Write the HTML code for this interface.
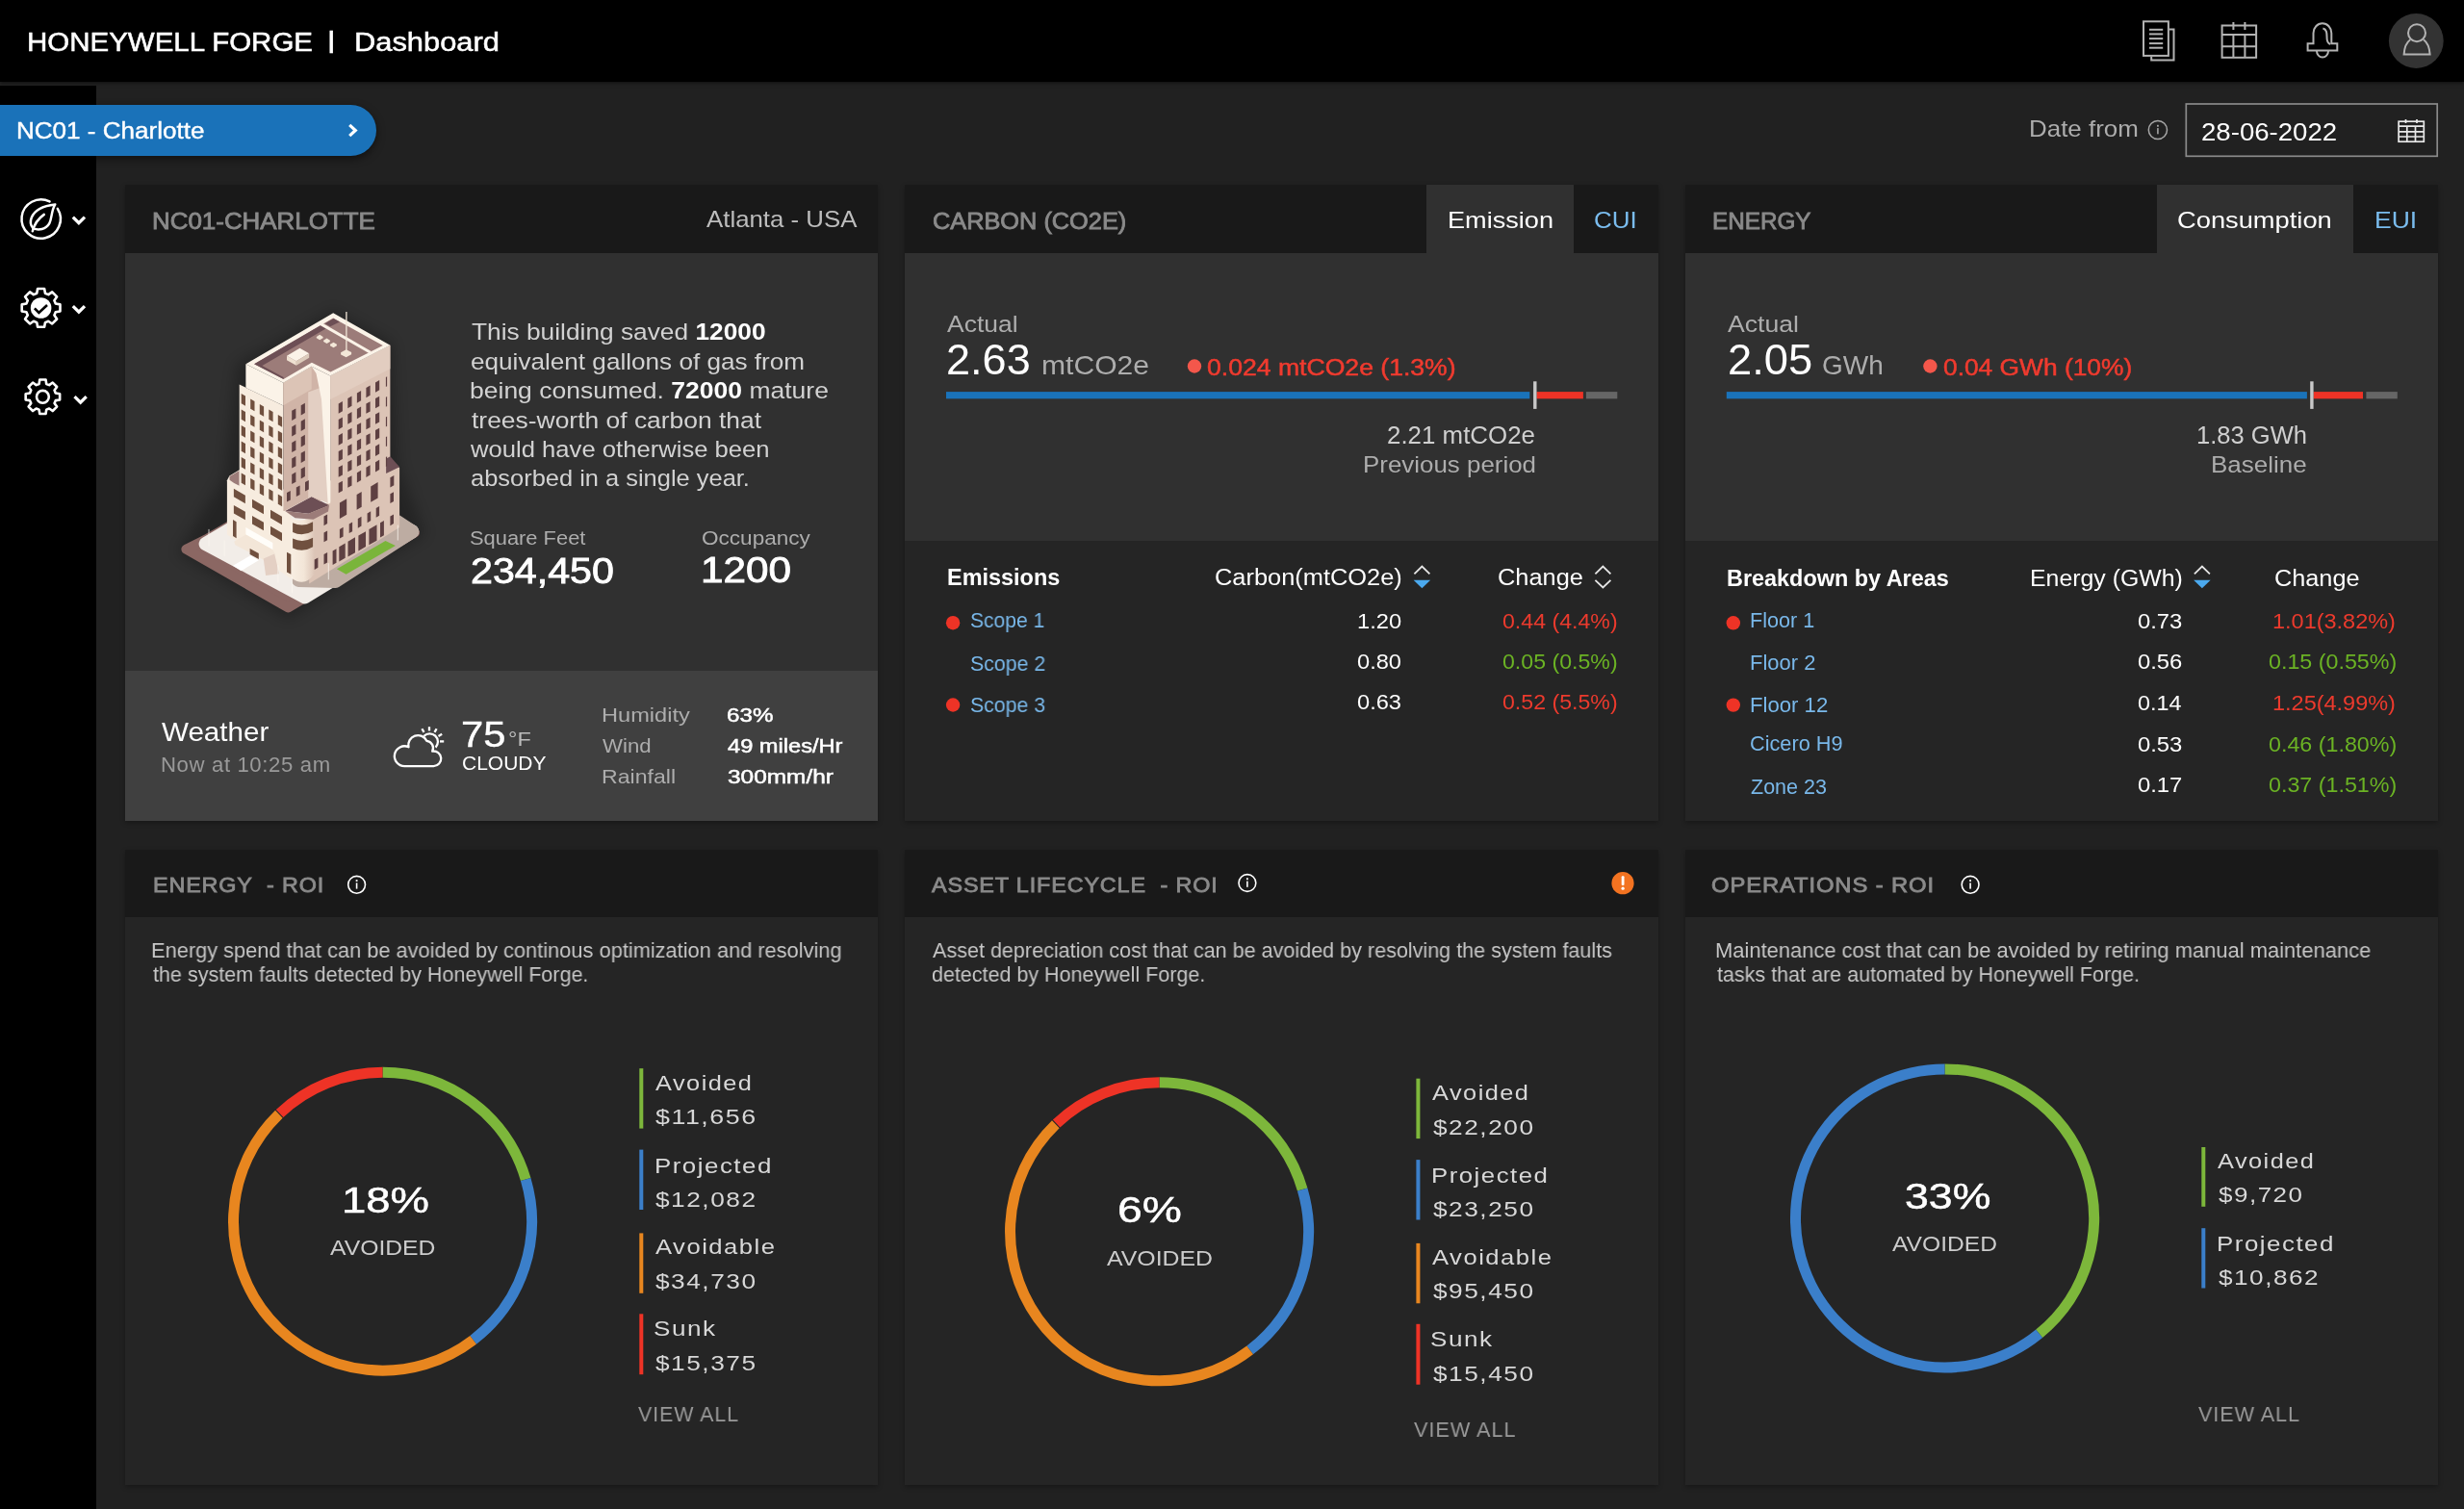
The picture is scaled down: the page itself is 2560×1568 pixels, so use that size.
<!DOCTYPE html>
<html lang="en"><head><meta charset="utf-8"><title>Honeywell Forge | Dashboard</title>
<style>
html,body{margin:0;padding:0}
body{width:2560px;height:1568px;overflow:hidden;background:#212121;position:relative;font-family:"Liberation Sans",sans-serif}
body>div{position:absolute}
.t{white-space:pre;line-height:1;transform-origin:0 0;z-index:5;will-change:transform}
.t b{font-weight:700}
.v{position:absolute;left:0;top:0;z-index:4}
</style></head>
<body>
<div style="left:0px;top:0px;width:2560px;height:85px;background:#000;box-shadow:0 1px 4px rgba(0,0,0,.6);z-index:2"></div>
<div style="left:0px;top:89px;width:100px;height:1479px;background:#000;"></div>
<div style="left:130px;top:192px;width:782px;height:661px;background:#252525;box-shadow:0 2px 5px rgba(0,0,0,.3)"></div>
<div style="left:130px;top:192px;width:782px;height:71px;background:#191919;"></div>
<div style="left:130px;top:263px;width:782px;height:434px;background:#303030;"></div>
<div style="left:130px;top:697px;width:782px;height:156px;background:#404040;"></div>
<div style="left:940px;top:192px;width:783px;height:661px;background:#252525;box-shadow:0 2px 5px rgba(0,0,0,.3)"></div>
<div style="left:940px;top:192px;width:783px;height:71px;background:#191919;"></div>
<div style="left:940px;top:263px;width:783px;height:298.5px;background:#303030;"></div>
<div style="left:1481.6px;top:192px;width:153.2px;height:72px;background:#303030;"></div>
<div style="left:1751px;top:192px;width:782px;height:661px;background:#252525;box-shadow:0 2px 5px rgba(0,0,0,.3)"></div>
<div style="left:1751px;top:192px;width:782px;height:71px;background:#191919;"></div>
<div style="left:1751px;top:263px;width:782px;height:298.5px;background:#303030;"></div>
<div style="left:2241px;top:192px;width:204.3px;height:72px;background:#303030;"></div>
<div style="left:130px;top:882.5px;width:782px;height:660.3px;background:#252525;box-shadow:0 2px 5px rgba(0,0,0,.3)"></div>
<div style="left:130px;top:882.5px;width:782px;height:70.3px;background:#191919;"></div>
<div style="left:940px;top:882.5px;width:783px;height:660.3px;background:#252525;box-shadow:0 2px 5px rgba(0,0,0,.3)"></div>
<div style="left:940px;top:882.5px;width:783px;height:70.3px;background:#191919;"></div>
<div style="left:1751px;top:882.5px;width:782px;height:660.3px;background:#252525;box-shadow:0 2px 5px rgba(0,0,0,.3)"></div>
<div style="left:1751px;top:882.5px;width:782px;height:70.3px;background:#191919;"></div>
<div style="left:-30px;top:108.6px;width:421px;height:53px;background:#1a72b9;border-radius:27px;box-shadow:0 3px 8px rgba(0,0,0,.5);z-index:3"></div>
<svg class="v" width="2560" height="1568" viewBox="0 0 2560 1568"><rect x="2271.3" y="108" width="260.9" height="54.3" fill="none" stroke="#8a8a8a" stroke-width="1.7"/><g><defs><filter id="bsh" x="-30%" y="-30%" width="160%" height="160%"><feGaussianBlur stdDeviation="7"/></filter></defs><polygon points="184.6,574.9 299.3,643.2 442.0,555.4 413.9,482.2 407.8,356.3 346.2,322.2 245.6,378.3 233.4,494.4" fill="#000" opacity="0.24" filter="url(#bsh)"/><polygon points="193.4,570.7 299.4,631.5 431.0,553.5 326.0,496.0 214.0,560.5" fill="#8b6763" stroke="#8b6763" stroke-width="10" stroke-linejoin="round"/><polygon points="213.6,565.1 316.5,620.4 428.2,552.3 326.0,498.0" fill="#f2ede8" stroke="#f2ede8" stroke-width="14" stroke-linejoin="round"/><polygon points="310.2,602.9 348.3,604.1 428.2,552.3 412.7,542.0 310.2,579.8" fill="#bdaca2" stroke="#bdaca2" stroke-width="14" stroke-linejoin="round"/><polygon points="349.9,591.3 400.5,562.1 410.9,567.0 359.6,596.8" fill="#7ab53a"/><polygon points="242.0,587.7 260.2,577.3 268.8,582.2 250.5,593.2" fill="#ffffff"/><polygon points="235.9,499.3 238.3,494.4 248.7,488.3 302.9,518.8 302.9,601.7 235.9,555.4" fill="#f7ecdf"/><polygon points="238.5,495.0 248.7,488.9 248.7,504.8 243.2,502.0 238.5,498.7" fill="#9c7c79"/><polygon points="343.2,390.5 405.4,358.8 405.4,477.3 415.1,485.9 415.1,548.0 321.2,606.6 321.2,531.0 343.2,521.2" fill="#dcc4b6"/><polygon points="401.1,492.0 401.1,476.7 405.4,474.3 415.1,485.2" fill="#6d4f55"/><defs><linearGradient id="cyl" x1="0" x2="1" y1="0" y2="0"><stop offset="0" stop-color="#f8eee2"/><stop offset="0.55" stop-color="#f3e6d8"/><stop offset="1" stop-color="#dcc5b7"/></linearGradient></defs><path d="M302.3 538.3Q314.5 545.3 326.7 532.3V596.6Q316.5 610.6 302.3 600.6Z" fill="url(#cyl)"/><path d="M304.1 543.2Q314.6 548.2 325.1 542.2V551.7Q314.6 558.2 304.1 553.0Z" fill="#70503f"/><path d="M304.1 559.6Q314.6 564.6 325.1 558.7V568.2Q314.6 574.6 304.1 569.4Z" fill="#70503f"/><polygon points="296.2,531.0 323.7,516.1 342.0,525.1 320.6,533.7" fill="#6d4f55"/><polygon points="296.2,531.0 320.6,533.7 342.0,525.1 341.0,531.6 325.5,539.8 306.6,538.3" fill="#9c7c79"/><polygon points="248.7,399.6 294.4,421.6 294.4,531.0 248.7,504.8" fill="#f7ecdf"/><polygon points="255.4,378.3 294.4,397.8 294.4,421.6 255.4,402.9" fill="#fbf3e8"/><polygon points="294.4,397.8 323.7,380.7 333.4,388.0 333.4,521.2 323.7,516.1 295.6,531.0 294.4,531.0" fill="#d0b4a7"/><polygon points="294.4,397.8 323.7,380.7 323.7,404.5 294.4,421.2" fill="#dcc4b6"/><polygon points="320.2,407.6 333.4,402.7 343.2,407.6 343.2,523.7 323.7,516.1 320.2,517.8" fill="#e3cfc3"/><polygon points="323.7,380.7 343.2,390.5 343.2,522.4 340.7,523.7 334.0,414.9 328.5,388.0" fill="#fbf3e8"/><polygon points="343.2,390.5 405.4,358.8 405.4,383.2 343.2,414.9" fill="#e2cdc0"/><polygon points="346.2,325.2 405.4,358.8 343.2,390.5 323.7,380.7 294.4,397.8 255.4,378.3" fill="#fbf3e8"/><polygon points="346.2,330.5 397.8,359.0 343.4,386.6 323.9,376.8 294.6,393.9 264.1,378.3" fill="#9c7c79"/><polygon points="264.1,378.3 332.8,338.3 338.5,341.5 272.4,380.1 294.6,392.0 294.6,393.9" fill="#6d4f55"/><path d="M332.2 335.9L384.9 366.3" stroke="#fbf3e8" stroke-width="3"/><polygon points="337.7,336.2 346.5,331.0 352.9,334.4 343.2,339.3" fill="#6d4f55"/><polygon points="298.0,369.8 311.5,361.8 321.2,367.3 307.8,375.2" fill="#fbf3e8"/><polygon points="298.0,369.8 307.8,375.2 307.8,379.8 298.0,374.3" fill="#efe2d2"/><polygon points="307.8,375.2 321.2,367.3 321.2,371.8 307.8,379.8" fill="#dccbbb"/><polygon points="328.8,349.9 332.2,347.8 335.6,349.9 335.6,351.3 332.2,353.3 328.8,351.3" fill="#f3e7d8"/><polygon points="336.1,353.7 339.5,351.6 342.9,353.7 342.9,355.1 339.5,357.1 336.1,355.1" fill="#f3e7d8"/><polygon points="343.0,357.8 346.5,355.7 349.9,357.8 349.9,359.3 346.5,361.2 343.0,359.3" fill="#f3e7d8"/><path d="M359.9 324.0L359.9 364.3" stroke="#f3e7d8" stroke-width="1.3"/><polygon points="354.1,366.3 359.6,363.3 365.1,366.1 365.1,368.3 359.6,371.2 354.1,368.5" fill="#f3e7d8"/><polygon points="250.7,409.0 255.0,411.5 255.0,421.7 250.7,419.2" fill="#70503f"/><polygon points="250.7,425.5 255.0,428.0 255.0,438.2 250.7,435.7" fill="#70503f"/><polygon points="250.7,442.1 255.0,444.6 255.0,454.8 250.7,452.3" fill="#70503f"/><polygon points="250.7,458.6 255.0,461.1 255.0,471.3 250.7,468.8" fill="#70503f"/><polygon points="250.7,475.1 255.0,477.6 255.0,487.8 250.7,485.3" fill="#70503f"/><polygon points="250.7,491.6 255.0,494.1 255.0,504.3 250.7,501.8" fill="#70503f"/><polygon points="260.2,414.5 264.5,417.0 264.5,427.2 260.2,424.7" fill="#70503f"/><polygon points="260.2,431.0 264.5,433.5 264.5,443.7 260.2,441.2" fill="#70503f"/><polygon points="260.2,447.6 264.5,450.0 264.5,460.2 260.2,457.8" fill="#70503f"/><polygon points="260.2,464.1 264.5,466.6 264.5,476.8 260.2,474.3" fill="#70503f"/><polygon points="260.2,480.6 264.5,483.1 264.5,493.3 260.2,490.8" fill="#70503f"/><polygon points="260.2,497.1 264.5,499.6 264.5,509.8 260.2,507.3" fill="#70503f"/><polygon points="269.8,420.0 274.1,422.5 274.1,432.7 269.8,430.2" fill="#70503f"/><polygon points="269.8,436.5 274.1,439.0 274.1,449.2 269.8,446.7" fill="#70503f"/><polygon points="269.8,453.0 274.1,455.5 274.1,465.7 269.8,463.2" fill="#70503f"/><polygon points="269.8,469.6 274.1,472.1 274.1,482.3 269.8,479.8" fill="#70503f"/><polygon points="269.8,486.1 274.1,488.6 274.1,498.8 269.8,496.3" fill="#70503f"/><polygon points="269.8,502.6 274.1,505.1 274.1,515.3 269.8,512.8" fill="#70503f"/><polygon points="279.3,425.5 283.6,428.0 283.6,438.2 279.3,435.7" fill="#70503f"/><polygon points="279.3,442.0 283.6,444.5 283.6,454.7 279.3,452.2" fill="#70503f"/><polygon points="279.3,458.5 283.6,461.0 283.6,471.2 279.3,468.7" fill="#70503f"/><polygon points="279.3,475.1 283.6,477.5 283.6,487.7 279.3,485.3" fill="#70503f"/><polygon points="279.3,491.6 283.6,494.1 283.6,504.3 279.3,501.8" fill="#70503f"/><polygon points="279.3,508.1 283.6,510.6 283.6,520.8 279.3,518.3" fill="#70503f"/><polygon points="288.8,431.0 293.1,433.5 293.1,443.7 288.8,441.2" fill="#70503f"/><polygon points="288.8,447.5 293.1,450.0 293.1,460.2 288.8,457.7" fill="#70503f"/><polygon points="288.8,464.0 293.1,466.5 293.1,476.7 288.8,474.2" fill="#70503f"/><polygon points="288.8,480.5 293.1,483.0 293.1,493.2 288.8,490.7" fill="#70503f"/><polygon points="288.8,497.1 293.1,499.6 293.1,509.8 288.8,507.3" fill="#70503f"/><polygon points="288.8,513.6 293.1,516.1 293.1,526.3 288.8,523.8" fill="#70503f"/><polygon points="303.2,426.8 307.4,424.4 307.4,434.6 303.2,437.0" fill="#5e4042"/><polygon points="303.2,443.4 307.4,440.9 307.4,451.1 303.2,453.6" fill="#5e4042"/><polygon points="303.2,459.9 307.4,457.5 307.4,467.7 303.2,470.1" fill="#5e4042"/><polygon points="303.2,476.4 307.4,474.0 307.4,484.2 303.2,486.6" fill="#5e4042"/><polygon points="303.2,492.9 307.4,490.5 307.4,500.7 303.2,503.1" fill="#5e4042"/><polygon points="312.7,421.2 316.9,418.8 316.9,429.0 312.7,431.4" fill="#5e4042"/><polygon points="312.7,437.7 316.9,435.3 316.9,445.5 312.7,447.9" fill="#5e4042"/><polygon points="312.7,454.3 316.9,451.8 316.9,462.0 312.7,464.5" fill="#5e4042"/><polygon points="312.7,470.8 316.9,468.4 316.9,478.6 312.7,481.0" fill="#5e4042"/><polygon points="312.7,487.3 316.9,484.9 316.9,495.1 312.7,497.5" fill="#5e4042"/><polygon points="298.0,512.1 301.8,509.9 301.8,519.4 298.0,521.6" fill="#5e4042"/><polygon points="307.8,506.6 311.6,504.4 311.6,513.9 307.8,516.1" fill="#5e4042"/><polygon points="317.0,501.1 320.8,498.9 320.8,508.4 317.0,510.6" fill="#5e4042"/><polygon points="351.7,419.5 355.9,417.1 355.9,427.3 351.7,429.7" fill="#5e4042"/><polygon points="351.7,436.0 355.9,433.6 355.9,443.8 351.7,446.2" fill="#5e4042"/><polygon points="351.7,452.6 355.9,450.1 355.9,460.3 351.7,462.8" fill="#5e4042"/><polygon points="351.7,469.1 355.9,466.7 355.9,476.9 351.7,479.3" fill="#5e4042"/><polygon points="351.7,485.6 355.9,483.2 355.9,493.4 351.7,495.8" fill="#5e4042"/><polygon points="351.7,502.1 355.9,499.7 355.9,509.9 351.7,512.3" fill="#5e4042"/><polygon points="361.3,414.0 365.5,411.6 365.5,421.8 361.3,424.2" fill="#5e4042"/><polygon points="361.3,430.5 365.5,428.1 365.5,438.3 361.3,440.7" fill="#5e4042"/><polygon points="361.3,447.1 365.5,444.7 365.5,454.9 361.3,457.3" fill="#5e4042"/><polygon points="361.3,463.6 365.5,461.2 365.5,471.4 361.3,473.8" fill="#5e4042"/><polygon points="361.3,480.1 365.5,477.7 365.5,487.9 361.3,490.3" fill="#5e4042"/><polygon points="361.3,496.6 365.5,494.2 365.5,504.4 361.3,506.8" fill="#5e4042"/><polygon points="370.9,408.5 375.1,406.1 375.1,416.3 370.9,418.7" fill="#5e4042"/><polygon points="370.9,425.1 375.1,422.6 375.1,432.8 370.9,435.3" fill="#5e4042"/><polygon points="370.9,441.6 375.1,439.2 375.1,449.4 370.9,451.8" fill="#5e4042"/><polygon points="370.9,458.1 375.1,455.7 375.1,465.9 370.9,468.3" fill="#5e4042"/><polygon points="370.9,474.6 375.1,472.2 375.1,482.4 370.9,484.8" fill="#5e4042"/><polygon points="370.9,491.2 375.1,488.7 375.1,498.9 370.9,501.4" fill="#5e4042"/><polygon points="380.4,403.0 384.6,400.6 384.6,410.8 380.4,413.2" fill="#5e4042"/><polygon points="380.4,419.6 384.6,417.2 384.6,427.4 380.4,429.8" fill="#5e4042"/><polygon points="380.4,436.1 384.6,433.7 384.6,443.9 380.4,446.3" fill="#5e4042"/><polygon points="380.4,452.6 384.6,450.2 384.6,460.4 380.4,462.8" fill="#5e4042"/><polygon points="380.4,469.1 384.6,466.7 384.6,476.9 380.4,479.3" fill="#5e4042"/><polygon points="380.4,485.7 384.6,483.2 384.6,493.4 380.4,495.9" fill="#5e4042"/><polygon points="390.0,397.6 394.2,395.1 394.2,405.3 390.0,407.8" fill="#5e4042"/><polygon points="390.0,414.1 394.2,411.7 394.2,421.9 390.0,424.3" fill="#5e4042"/><polygon points="390.0,430.6 394.2,428.2 394.2,438.4 390.0,440.8" fill="#5e4042"/><polygon points="390.0,447.1 394.2,444.7 394.2,454.9 390.0,457.3" fill="#5e4042"/><polygon points="390.0,463.7 394.2,461.2 394.2,471.4 390.0,473.9" fill="#5e4042"/><polygon points="390.0,480.2 394.2,477.8 394.2,488.0 390.0,490.4" fill="#5e4042"/><polygon points="400.9,392.0 402.1,391.3 402.1,401.3 400.9,402.0" fill="#5e4042"/><polygon points="400.9,412.7 402.1,412.0 402.1,422.0 400.9,422.7" fill="#5e4042"/><polygon points="400.9,433.4 402.1,432.7 402.1,442.7 400.9,443.4" fill="#5e4042"/><polygon points="400.9,454.1 402.1,453.5 402.1,463.5 400.9,464.1" fill="#5e4042"/><polygon points="400.9,474.9 402.1,474.2 402.1,484.2 400.9,484.9" fill="#5e4042"/><polygon points="242.9,507.8 254.9,514.7 254.9,523.2 242.9,516.3" fill="#70503f"/><polygon points="242.9,524.9 254.9,531.8 254.9,540.3 242.9,533.4" fill="#70503f"/><polygon points="262.0,518.8 274.0,525.7 274.0,534.2 262.0,527.3" fill="#70503f"/><polygon points="262.0,535.9 274.0,542.8 274.0,551.3 262.0,544.4" fill="#70503f"/><polygon points="281.0,529.8 293.0,536.7 293.0,545.2 281.0,538.3" fill="#70503f"/><polygon points="281.0,546.8 293.0,553.8 293.0,562.3 281.0,555.3" fill="#70503f"/><polygon points="242.0,540.1 245.6,542.2 245.6,559.2 242.0,557.1" fill="#70503f"/><polygon points="298.0,573.7 302.3,576.1 302.3,596.8 298.0,594.4" fill="#70503f"/><polygon points="255.4,548.0 283.4,563.9 283.4,571.2 255.4,555.4" fill="#fffdf9"/><polygon points="243.2,562.7 255.4,555.4 283.4,571.2 285.9,576.1 274.9,582.2 244.4,566.3" fill="#f3e6d8"/><polygon points="259.6,570.0 268.8,574.9 268.8,581.0 259.6,576.1" fill="#70503f"/><polygon points="273.7,580.4 285.2,575.5 290.1,596.2 276.1,598.0" fill="#e4d0c4"/><polygon points="352.9,522.4 360.2,518.2 360.2,534.7 352.9,538.9" fill="#5e4042"/><polygon points="370.6,513.9 375.7,510.9 375.7,526.8 370.6,529.8" fill="#5e4042"/><polygon points="385.2,505.4 392.6,501.1 392.6,517.6 385.2,521.8" fill="#5e4042"/><polygon points="405.4,496.2 409.3,494.0 409.3,504.3 405.4,506.6" fill="#5e4042"/><polygon points="405.4,513.3 409.0,511.2 409.0,520.9 405.4,523.0" fill="#5e4042"/><polygon points="405.4,536.5 409.0,534.4 409.0,544.1 405.4,546.2" fill="#5e4042"/><polygon points="336.5,536.5 340.1,534.4 340.1,544.1 336.5,546.2" fill="#5e4042"/><polygon points="336.5,553.5 340.1,551.4 340.1,561.2 336.5,563.3" fill="#5e4042"/><polygon points="352.9,549.9 356.6,547.8 356.6,557.5 352.9,559.6" fill="#5e4042"/><polygon points="362.7,544.4 366.1,542.4 366.1,552.2 362.7,554.1" fill="#5e4042"/><polygon points="371.8,538.9 375.5,536.8 375.5,546.5 371.8,548.7" fill="#5e4042"/><polygon points="381.6,533.4 385.2,531.3 385.2,541.1 381.6,543.2" fill="#5e4042"/><polygon points="390.7,527.9 394.1,526.0 394.1,535.7 390.7,537.7" fill="#5e4042"/><polygon points="326.7,581.6 330.4,579.5 330.4,589.8 326.7,592.0" fill="#5e4042"/><polygon points="336.5,576.1 340.1,574.0 340.1,584.4 336.5,586.5" fill="#5e4042"/><polygon points="345.6,572.4 349.5,570.2 349.5,584.8 345.6,587.1" fill="#5e4042"/><polygon points="352.3,568.2 358.7,564.5 358.7,579.8 352.3,583.4" fill="#5e4042"/><polygon points="361.5,562.7 369.0,558.3 369.0,574.2 361.5,578.5" fill="#5e4042"/><polygon points="372.4,556.6 380.0,552.2 380.0,568.1 372.4,572.4" fill="#5e4042"/><polygon points="383.4,549.9 391.5,545.2 391.5,561.7 383.4,566.3" fill="#5e4042"/><polygon points="395.0,543.2 398.9,540.9 398.9,556.2 395.0,558.4" fill="#5e4042"/><path d="M217.0 549.9V567.6" stroke="#fbf6ef" stroke-width="0.9" opacity="0.85"/><path d="M233.2 561.5V577.9" stroke="#fbf6ef" stroke-width="0.9" opacity="0.85"/><path d="M341.3 585.2V602.3" stroke="#fbf6ef" stroke-width="0.9" opacity="0.85"/><path d="M413.3 545.6V561.5" stroke="#fbf6ef" stroke-width="0.9" opacity="0.85"/><path d="M288.9 587.1V605.4" stroke="#fbf6ef" stroke-width="0.9" opacity="0.85"/><path d="M303.5 599.3V616.3" stroke="#fbf6ef" stroke-width="0.9" opacity="0.85"/></g><rect x="983" y="407.1" width="606.3" height="7.2" fill="#1a73ba"/><rect x="1596.5" y="407.1" width="48.4" height="7.2" fill="#ee3326"/><rect x="1647.9" y="407.1" width="32.4" height="7.2" fill="#666"/><rect x="1593.1" y="396.3" width="3.4" height="28.6" fill="#c8c8c8"/><rect x="1793.8" y="407.1" width="603.1" height="7.2" fill="#1a73ba"/><rect x="2403.6" y="407.1" width="51.4" height="7.2" fill="#ee3326"/><rect x="2458.4" y="407.1" width="32.4" height="7.2" fill="#666"/><rect x="2400.2" y="396.3" width="3.4" height="28.6" fill="#c8c8c8"/><circle cx="1241" cy="380.5" r="7.2" fill="#f4574b"/><circle cx="2005.4" cy="380.5" r="7.2" fill="#f4574b"/><circle cx="990.1" cy="647.2" r="7.2" fill="#ee3326"/><circle cx="990.1" cy="732.5" r="7.2" fill="#ee3326"/><circle cx="1800.8" cy="647.3" r="7.2" fill="#ee3326"/><circle cx="1800.8" cy="732.6" r="7.2" fill="#ee3326"/><path d="M1469.4 596.3L1477.4 588.6L1485.4 596.3" stroke="#e6e6e6" stroke-width="1.8" fill="none"/><path d="M1468.6000000000001 602.8H1486.2L1477.4 611.2Z" fill="#4ba9ee"/><path d="M1657.4 596.3L1665.4 588.6L1673.4 596.3" stroke="#e6e6e6" stroke-width="1.8" fill="none"/><path d="M1657.4 602.8L1665.4 610.5L1673.4 602.8" stroke="#e6e6e6" stroke-width="1.8" fill="none"/><path d="M2279.9 596.3L2287.9 588.6L2295.9 596.3" stroke="#e6e6e6" stroke-width="1.8" fill="none"/><path d="M2279.1 602.8H2296.7000000000003L2287.9 611.2Z" fill="#4ba9ee"/><path d="M397.50 1114.20A155 155 0 0 1 546.19 1225.44" stroke="#7db73b" stroke-width="11" fill="none"/><path d="M546.19 1225.44A155 155 0 0 1 491.64 1392.33" stroke="#3b7fca" stroke-width="11" fill="none"/><path d="M491.64 1392.33A155 155 0 0 1 289.83 1157.70" stroke="#e8861f" stroke-width="11" fill="none"/><path d="M290.61 1156.95A155 155 0 0 1 397.50 1114.20" stroke="#ee3326" stroke-width="11" fill="none"/><path d="M1204.50 1124.80A155 155 0 0 1 1353.19 1236.04" stroke="#7db73b" stroke-width="11" fill="none"/><path d="M1353.19 1236.04A155 155 0 0 1 1298.64 1402.93" stroke="#3b7fca" stroke-width="11" fill="none"/><path d="M1298.64 1402.93A155 155 0 0 1 1096.83 1168.30" stroke="#e8861f" stroke-width="11" fill="none"/><path d="M1097.61 1167.55A155 155 0 0 1 1204.50 1124.80" stroke="#ee3326" stroke-width="11" fill="none"/><path d="M2020.50 1110.90A155 155 0 0 1 2118.67 1385.85" stroke="#7db73b" stroke-width="11" fill="none"/><path d="M2118.67 1385.85A155 155 0 1 1 2020.50 1110.90" stroke="#3b7fca" stroke-width="11" fill="none"/><rect x="664.3" y="1110.2" width="4" height="62.4" fill="#7db73b"/><rect x="664.3" y="1194.6" width="4" height="62.4" fill="#3b7fca"/><rect x="664.3" y="1281.4" width="4" height="62.4" fill="#e8861f"/><rect x="664.3" y="1365.3" width="4" height="62.9" fill="#ee3326"/><rect x="1471.4" y="1120.7" width="4" height="62.4" fill="#7db73b"/><rect x="1471.4" y="1205.1" width="4" height="62.4" fill="#3b7fca"/><rect x="1471.4" y="1291.9" width="4" height="62.4" fill="#e8861f"/><rect x="1471.4" y="1375.8" width="4" height="62.9" fill="#ee3326"/><rect x="2287.3" y="1192" width="4" height="61.8" fill="#7db73b"/><rect x="2287.3" y="1276.2" width="4" height="62.3" fill="#3b7fca"/><g stroke="#b3b3b3" stroke-width="2" fill="none"><rect x="2227" y="22.3" width="25.9" height="35.6"/><path d="M2253.8 30.6H2258.5V62.4H2235.2V58.8"/><path d="M2233 30.8H2247.2"/><path d="M2233 35.4H2247.2"/><path d="M2233 40.1H2247.2"/><path d="M2233 45.1H2247.2"/><path d="M2233 49.7H2247.2"/><rect x="2308.6" y="26.5" width="35.5" height="33.3"/><path d="M2308.6 36H2344.1M2308.6 48.2H2344.1M2320.4 23V31M2332.4 23V31M2320.4 36V59.8M2332.4 36V59.8"/><path d="M2403.5 45.2V34.5A9.4 10.2 0 0 1 2422.3 34.5V45.2H2428.3V52.4H2397.6V45.2Z" stroke-linejoin="miter"/><path d="M2407 53A6 6.6 0 0 0 2419 53"/><path d="M2413.4 29.5C2417.8 30.5 2417.5 35 2417.6 40C2417.7 43 2419 45 2421 46"/></g><circle cx="2510.3" cy="42.5" r="28.4" fill="#333"/><g stroke="#b3b3b3" stroke-width="2" fill="none"><circle cx="2511" cy="34.2" r="9"/><path d="M2504.2 41.2C2499.5 44.5 2498 50 2497.6 56.6H2524.6C2524.2 50 2522.7 44.5 2518 41.2"/></g><circle cx="2241.9" cy="135" r="9.6" stroke="#a6a6a6" stroke-width="1.5" fill="none"/><rect x="2241.1" y="133.1" width="1.6" height="6.2" fill="#a6a6a6"/><rect x="2241.0" y="129.8" width="1.8" height="1.9" fill="#a6a6a6"/><g stroke="#e8e8e8" stroke-width="1.7" fill="none"><rect x="2492.1" y="126.2" width="26.2" height="21"/><path d="M2492.1 131.2H2518.3M2492.1 136.9H2518.3M2492.1 142H2518.3M2500.8 131.2V147.2M2509.5 131.2V147.2M2499.5 124V128M2511 124V128"/></g><path d="M363.2 129.8L369.3 135.5L363.2 141.2" stroke="#fff" stroke-width="3.2" fill="none"/><g stroke="#fff" stroke-width="2.5" fill="none" stroke-linecap="round" stroke-linejoin="round"><path d="M59.83 216.80A20.2 20.2 0 1 1 51.56 209.34"/><path d="M57.3 212.4C46.5 213.6 36.5 216.8 32.8 226C30.8 231 32.2 235 34.5 237.4C40 239.4 47.8 238.6 51.3 232.2C54 227 53.2 219 57.3 212.4Z"/><path d="M33.8 240.3C35.6 233 39.6 227.2 45.8 222.9"/></g><path d="M75.80 225.55L81.90 231.65L88.00 225.55" stroke="#fff" stroke-width="3.3" fill="none"/><path d="M38.24 304.71L39.09 300.01L46.11 300.01L46.96 304.71L50.26 306.08L54.19 303.35L59.15 308.31L56.42 312.24L57.79 315.54L62.49 316.39L62.49 323.41L57.79 324.26L56.42 327.56L59.15 331.49L54.19 336.45L50.26 333.72L46.96 335.09L46.11 339.79L39.09 339.79L38.24 335.09L34.94 333.72L31.01 336.45L26.05 331.49L28.78 327.56L27.41 324.26L22.71 323.41L22.71 316.39L27.41 315.54L28.78 312.24L26.05 308.31L31.01 303.35L34.94 306.08Z" stroke="#fff" stroke-width="2.6" fill="none" stroke-linejoin="round"/><circle cx="42.6" cy="320" r="10.8" fill="#fff"/><path d="M35.9 320.4L40.4 324.9L49 317" stroke="#000" stroke-width="2.6" fill="none"/><path d="M75.80 318.05L81.90 324.15L88.00 318.05" stroke="#fff" stroke-width="3.3" fill="none"/><path d="M40.57 398.94L41.27 394.57L47.53 394.57L48.23 398.94L51.14 400.14L54.72 397.56L59.14 401.98L56.56 405.56L57.76 408.47L62.13 409.17L62.13 415.43L57.76 416.13L56.56 419.04L59.14 422.62L54.72 427.04L51.14 424.46L48.23 425.66L47.53 430.03L41.27 430.03L40.57 425.66L37.66 424.46L34.08 427.04L29.66 422.62L32.24 419.04L31.04 416.13L26.67 415.43L26.67 409.17L31.04 408.47L32.24 405.56L29.66 401.98L34.08 397.56L37.66 400.14Z" stroke="#fff" stroke-width="2.6" fill="none" stroke-linejoin="round"/><circle cx="44.4" cy="412.3" r="6.4" stroke="#fff" stroke-width="2.6" fill="none"/><path d="M77.50 412.15L83.60 418.25L89.70 412.15" stroke="#fff" stroke-width="3.3" fill="none"/><g stroke="#fff" stroke-width="2.3" fill="none" stroke-linejoin="round"><path d="M420.3 796.1A10.4 10.4 0 1 1 424.5 776.2A10 10 0 0 1 443.3 769.8A7.5 7.5 0 0 1 449.2 780.6A7.8 7.8 0 1 1 450.5 796.1Z"/><path d="M440.4 765A7.9 7.9 0 0 1 452.6 776.6"/><path d="M440.50 760.87L438.40 757.24"/><path d="M446.00 759.40L446.00 755.20"/><path d="M451.50 760.87L453.60 757.24"/><path d="M455.53 764.90L459.16 762.80"/><path d="M457.00 770.40L461.20 770.40"/></g><circle cx="370.6" cy="919.3" r="8.9" stroke="#fff" stroke-width="1.6" fill="none"/><rect x="369.8" y="917.4" width="1.6" height="6.2" fill="#fff"/><rect x="369.70000000000005" y="914.0999999999999" width="1.8" height="1.9" fill="#fff"/><circle cx="1295.9" cy="917.5" r="8.9" stroke="#fff" stroke-width="1.6" fill="none"/><rect x="1295.1000000000001" y="915.6" width="1.6" height="6.2" fill="#fff"/><rect x="1295.0" y="912.3" width="1.8" height="1.9" fill="#fff"/><circle cx="2047.1" cy="919.3" r="8.9" stroke="#fff" stroke-width="1.6" fill="none"/><rect x="2046.3" y="917.4" width="1.6" height="6.2" fill="#fff"/><rect x="2046.1999999999998" y="914.0999999999999" width="1.8" height="1.9" fill="#fff"/><circle cx="1686" cy="917.7" r="11.6" fill="#f37321"/><rect x="1684.7" y="910.3" width="2.8" height="9.6" rx="1" fill="#fff"/><circle cx="1686.1" cy="923.2" r="1.6" fill="#fff"/></svg>
<div class="t" style="left:28.32px;top:31.10px;font-size:27.0px;color:#ffffff;transform:scaleX(1.0917);-webkit-text-stroke:0.5px #ffffff;">HONEYWELL FORGE</div>
<div class="t" style="left:339.90px;top:31.03px;font-size:23.5px;color:#ffffff;transform:scaleX(1.4);-webkit-text-stroke:0.5px #ffffff;">|</div>
<div class="t" style="left:368.21px;top:31.10px;font-size:27.0px;color:#ffffff;transform:scaleX(1.1428);-webkit-text-stroke:0.5px #ffffff;">Dashboard</div>
<div class="t" style="left:16.52px;top:125.21px;font-size:23.5px;color:#ffffff;transform:scaleX(1.1081);-webkit-text-stroke:0.4px #ffffff;">NC01 - Charlotte</div>
<div class="t" style="left:2108.26px;top:121.98px;font-size:24.0px;color:#adadad;transform:scaleX(1.0798);">Date from</div>
<div class="t" style="left:2287.44px;top:125.17px;font-size:25.0px;color:#ffffff;transform:scaleX(1.1037);">28-06-2022</div>
<div class="t" style="left:158.08px;top:219.05px;font-size:23.0px;color:#8a8a8a;transform:scaleX(1.1266);-webkit-text-stroke:0.8px #8a8a8a;">NC01-CHARLOTTE</div>
<div class="t" style="left:734.00px;top:216.06px;font-size:24.0px;color:#bdbdbd;transform:scaleX(1.0759);">Atlanta - USA</div>
<div class="t" style="left:489.96px;top:333.48px;font-size:24.5px;color:#d2d2d2;transform:scaleX(1.0733);">This building saved <b style="color:#ffffff">12000</b></div>
<div class="t" style="left:488.89px;top:363.55px;font-size:24.5px;color:#d2d2d2;transform:scaleX(1.0663);">equivalent gallons of gas from</div>
<div class="t" style="left:488.08px;top:394.44px;font-size:24.5px;color:#d2d2d2;transform:scaleX(1.0821);">being consumed. <b style="color:#ffffff">72000</b> mature</div>
<div class="t" style="left:489.96px;top:424.51px;font-size:24.5px;color:#d2d2d2;transform:scaleX(1.0786);">trees-worth of carbon that</div>
<div class="t" style="left:489.40px;top:454.51px;font-size:24.5px;color:#d2d2d2;transform:scaleX(1.046);">would have otherwise been</div>
<div class="t" style="left:488.92px;top:485.40px;font-size:24.5px;color:#d2d2d2;transform:scaleX(1.0383);">absorbed in a single year.</div>
<div class="t" style="left:488.36px;top:548.92px;font-size:20.5px;color:#adadad;transform:scaleX(1.0669);">Square Feet</div>
<div class="t" style="left:489.31px;top:576.20px;font-size:36.0px;color:#ffffff;transform:scaleX(1.1442);-webkit-text-stroke:0.8px #ffffff;">234,450</div>
<div class="t" style="left:728.74px;top:548.92px;font-size:20.5px;color:#adadad;transform:scaleX(1.0999);">Occupancy</div>
<div class="t" style="left:728.32px;top:575.40px;font-size:36.0px;color:#ffffff;transform:scaleX(1.1734);-webkit-text-stroke:0.8px #ffffff;">1200</div>
<div class="t" style="left:168.04px;top:747.00px;font-size:28.0px;color:#ffffff;transform:scaleX(1.0568);">Weather</div>
<div class="t" style="left:166.68px;top:784.98px;font-size:21.5px;color:#9a9a9a;letter-spacing:0.6px;transform:scaleX(1.0304);">Now at 10:25 am</div>
<div class="t" style="left:478.54px;top:744.89px;font-size:37.0px;color:#ffffff;transform:scaleX(1.1278);-webkit-text-stroke:0.4px #ffffff;">75</div>
<div class="t" style="left:528.40px;top:757.50px;font-size:20.5px;color:#bbbbbb;transform:scaleX(1.1439);">°F</div>
<div class="t" style="left:480.45px;top:782.58px;font-size:20.5px;color:#ffffff;transform:scaleX(1.0233);">CLOUDY</div>
<div class="t" style="left:625.09px;top:732.19px;font-size:21.0px;color:#adadad;transform:scaleX(1.1238);">Humidity</div>
<div class="t" style="left:626.42px;top:764.23px;font-size:21.0px;color:#adadad;transform:scaleX(1.0577);">Wind</div>
<div class="t" style="left:625.12px;top:796.23px;font-size:21.0px;color:#adadad;transform:scaleX(1.1);">Rainfall</div>
<div class="t" style="left:755.21px;top:733.04px;font-size:20.0px;color:#ffffff;transform:scaleX(1.2093);-webkit-text-stroke:0.5px #ffffff;">63%</div>
<div class="t" style="left:756.42px;top:765.08px;font-size:20.0px;color:#ffffff;transform:scaleX(1.1814);-webkit-text-stroke:0.5px #ffffff;">49 miles/Hr</div>
<div class="t" style="left:755.70px;top:797.08px;font-size:20.0px;color:#ffffff;transform:scaleX(1.2206);-webkit-text-stroke:0.5px #ffffff;">300mm/hr</div>
<div class="t" style="left:968.82px;top:219.25px;font-size:23.0px;color:#8a8a8a;transform:scaleX(1.1011);-webkit-text-stroke:0.8px #8a8a8a;">CARBON (CO2E)</div>
<div class="t" style="left:1503.54px;top:217.48px;font-size:24.0px;color:#ffffff;transform:scaleX(1.1294);">Emission</div>
<div class="t" style="left:1656.39px;top:217.48px;font-size:24.0px;color:#7abcee;transform:scaleX(1.0824);">CUI</div>
<div class="t" style="left:983.96px;top:324.55px;font-size:24.5px;color:#adadad;transform:scaleX(1.0803);">Actual</div>
<div class="t" style="left:983.48px;top:353.32px;font-size:43.5px;color:#ffffff;transform:scaleX(1.0357);">2.63</div>
<div class="t" style="left:1081.59px;top:366.12px;font-size:27.5px;color:#adadad;transform:scaleX(1.0936);">mtCO2e</div>
<div class="t" style="left:1254.32px;top:370.82px;font-size:23.5px;color:#f03b2f;transform:scaleX(1.1314);-webkit-text-stroke:0.5px #f03b2f;">0.024 mtCO2e (1.3%)</div>
<div class="t" style="left:1441.00px;top:440.13px;font-size:25.0px;color:#cfcfcf;transform:scaleX(1.0356);">2.21 mtCO2e</div>
<div class="t" style="left:1416.32px;top:470.55px;font-size:24.5px;color:#adadad;transform:scaleX(1.0574);">Previous period</div>
<div class="t" style="left:983.52px;top:589.29px;font-size:23.0px;color:#ffffff;transform:scaleX(1.0198);font-weight:700;">Emissions</div>
<div class="t" style="left:1262.36px;top:588.87px;font-size:23.0px;color:#ffffff;transform:scaleX(1.1043);">Carbon(mtCO2e)</div>
<div class="t" style="left:1555.82px;top:588.87px;font-size:23.0px;color:#ffffff;transform:scaleX(1.1039);">Change</div>
<div class="t" style="left:1007.74px;top:635.45px;font-size:21.5px;color:#79b8ea;transform:scaleX(0.9791);">Scope 1</div>
<div class="t" style="left:1007.74px;top:679.52px;font-size:21.5px;color:#79b8ea;transform:scaleX(0.9915);">Scope 2</div>
<div class="t" style="left:1007.74px;top:722.83px;font-size:21.5px;color:#79b8ea;transform:scaleX(0.9894);">Scope 3</div>
<div class="t" style="left:1409.78px;top:634.68px;font-size:22.0px;color:#ffffff;transform:scaleX(1.0754);">1.20</div>
<div class="t" style="left:1409.82px;top:676.68px;font-size:22.0px;color:#ffffff;transform:scaleX(1.0737);">0.80</div>
<div class="t" style="left:1409.82px;top:719.22px;font-size:22.0px;color:#ffffff;transform:scaleX(1.0737);">0.63</div>
<div class="t" style="left:1561.20px;top:634.68px;font-size:22.0px;color:#ec3a2d;transform:scaleX(1.0522);">0.44 (4.4%)</div>
<div class="t" style="left:1561.20px;top:676.68px;font-size:22.0px;color:#6bb324;transform:scaleX(1.0522);">0.05 (0.5%)</div>
<div class="t" style="left:1561.20px;top:719.22px;font-size:22.0px;color:#ec3a2d;transform:scaleX(1.0522);">0.52 (5.5%)</div>
<div class="t" style="left:1779.44px;top:219.05px;font-size:23.0px;color:#8a8a8a;transform:scaleX(1.0552);-webkit-text-stroke:0.8px #8a8a8a;">ENERGY</div>
<div class="t" style="left:2262.44px;top:217.48px;font-size:24.0px;color:#ffffff;transform:scaleX(1.1368);">Consumption</div>
<div class="t" style="left:2467.13px;top:217.48px;font-size:24.0px;color:#7abcee;transform:scaleX(1.1048);">EUI</div>
<div class="t" style="left:1794.50px;top:324.55px;font-size:24.5px;color:#adadad;transform:scaleX(1.0866);">Actual</div>
<div class="t" style="left:1794.81px;top:353.32px;font-size:43.5px;color:#ffffff;transform:scaleX(1.0414);">2.05</div>
<div class="t" style="left:1893.44px;top:366.12px;font-size:27.5px;color:#adadad;transform:scaleX(1.0185);">GWh</div>
<div class="t" style="left:2019.20px;top:370.82px;font-size:23.5px;color:#f03b2f;transform:scaleX(1.121);-webkit-text-stroke:0.5px #f03b2f;">0.04 GWh (10%)</div>
<div class="t" style="left:2282.32px;top:439.75px;font-size:25.0px;color:#cfcfcf;transform:scaleX(1.0218);">1.83 GWh</div>
<div class="t" style="left:2297.39px;top:470.98px;font-size:24.5px;color:#adadad;transform:scaleX(1.0601);">Baseline</div>
<div class="t" style="left:1794.49px;top:589.71px;font-size:23.0px;color:#ffffff;transform:scaleX(1.0181);font-weight:700;">Breakdown by Areas</div>
<div class="t" style="left:2109.17px;top:589.71px;font-size:23.0px;color:#ffffff;transform:scaleX(1.0807);">Energy (GWh)</div>
<div class="t" style="left:2362.82px;top:589.71px;font-size:23.0px;color:#ffffff;transform:scaleX(1.0991);">Change</div>
<div class="t" style="left:1817.82px;top:635.40px;font-size:21.5px;color:#79b8ea;transform:scaleX(1.006);">Floor 1</div>
<div class="t" style="left:1817.81px;top:679.45px;font-size:21.5px;color:#79b8ea;transform:scaleX(1.0219);">Floor 2</div>
<div class="t" style="left:1817.80px;top:722.87px;font-size:21.5px;color:#79b8ea;transform:scaleX(1.0302);">Floor 12</div>
<div class="t" style="left:1818.49px;top:763.48px;font-size:21.5px;color:#79b8ea;transform:scaleX(1.0098);">Cicero H9</div>
<div class="t" style="left:1818.70px;top:807.52px;font-size:21.5px;color:#79b8ea;transform:scaleX(0.9962);">Zone 23</div>
<div class="t" style="left:2220.78px;top:634.68px;font-size:22.0px;color:#ffffff;transform:scaleX(1.0827);">0.73</div>
<div class="t" style="left:2220.78px;top:677.10px;font-size:22.0px;color:#ffffff;transform:scaleX(1.0827);">0.56</div>
<div class="t" style="left:2220.78px;top:719.64px;font-size:22.0px;color:#ffffff;transform:scaleX(1.0626);">0.14</div>
<div class="t" style="left:2220.78px;top:763.06px;font-size:22.0px;color:#ffffff;transform:scaleX(1.0827);">0.53</div>
<div class="t" style="left:2220.78px;top:805.18px;font-size:22.0px;color:#ffffff;transform:scaleX(1.0827);">0.17</div>
<div class="t" style="left:2361.26px;top:634.68px;font-size:22.0px;color:#ec3a2d;transform:scaleX(1.0669);">1.01(3.82%)</div>
<div class="t" style="left:2356.70px;top:677.10px;font-size:22.0px;color:#6bb324;transform:scaleX(1.0576);">0.15 (0.55%)</div>
<div class="t" style="left:2361.26px;top:719.64px;font-size:22.0px;color:#ec3a2d;transform:scaleX(1.0669);">1.25(4.99%)</div>
<div class="t" style="left:2356.70px;top:763.06px;font-size:22.0px;color:#6bb324;transform:scaleX(1.0576);">0.46 (1.80%)</div>
<div class="t" style="left:2356.70px;top:805.18px;font-size:22.0px;color:#6bb324;transform:scaleX(1.0576);">0.37 (1.51%)</div>
<div class="t" style="left:158.79px;top:909.62px;font-size:21.5px;color:#8a8a8a;letter-spacing:0.8px;transform:scaleX(1.0859);-webkit-text-stroke:0.8px #8a8a8a;">ENERGY  - ROI</div>
<div class="t" style="left:157.29px;top:976.60px;font-size:22.0px;color:#c6c6c6;transform:scaleX(0.9911);">Energy spend that can be avoided by continous optimization and resolving</div>
<div class="t" style="left:159.08px;top:1001.56px;font-size:22.0px;color:#c6c6c6;transform:scaleX(0.9788);">the system faults detected by Honeywell Forge.</div>
<div class="t" style="left:354.66px;top:1228.92px;font-size:37.5px;color:#ffffff;transform:scaleX(1.2126);-webkit-text-stroke:0.5px #ffffff;">18%</div>
<div class="t" style="left:342.54px;top:1285.56px;font-size:22.0px;color:#cccccc;transform:scaleX(1.124);">AVOIDED</div>
<div class="t" style="left:680.54px;top:1115.02px;font-size:22.5px;color:#d8d8d8;letter-spacing:1.3px;transform:scaleX(1.1269);">Avoided</div>
<div class="t" style="left:681.46px;top:1150.02px;font-size:22.5px;color:#d8d8d8;letter-spacing:1.3px;transform:scaleX(1.1895);">$11,656</div>
<div class="t" style="left:679.65px;top:1200.52px;font-size:22.5px;color:#d8d8d8;letter-spacing:1.3px;transform:scaleX(1.1502);">Projected</div>
<div class="t" style="left:681.46px;top:1235.52px;font-size:22.5px;color:#d8d8d8;letter-spacing:1.3px;transform:scaleX(1.167);">$12,082</div>
<div class="t" style="left:680.54px;top:1284.63px;font-size:22.5px;color:#d8d8d8;letter-spacing:1.3px;transform:scaleX(1.1396);">Avoidable</div>
<div class="t" style="left:681.46px;top:1321.02px;font-size:22.5px;color:#d8d8d8;letter-spacing:1.3px;transform:scaleX(1.167);">$34,730</div>
<div class="t" style="left:679.40px;top:1370.13px;font-size:22.5px;color:#d8d8d8;letter-spacing:1.3px;transform:scaleX(1.1597);">Sunk</div>
<div class="t" style="left:681.46px;top:1406.06px;font-size:22.5px;color:#d8d8d8;letter-spacing:1.3px;transform:scaleX(1.167);">$15,375</div>
<div class="t" style="left:662.96px;top:1459.06px;font-size:22.5px;color:#9a9a9a;letter-spacing:1.0px;transform:scaleX(0.9504);">VIEW ALL</div>
<div class="t" style="left:967.58px;top:909.62px;font-size:21.5px;color:#8a8a8a;letter-spacing:0.8px;transform:scaleX(1.0862);-webkit-text-stroke:0.8px #8a8a8a;">ASSET LIFECYCLE  - ROI</div>
<div class="t" style="left:969.08px;top:976.60px;font-size:22.0px;color:#c6c6c6;transform:scaleX(0.9801);">Asset depreciation cost that can be avoided by resolving the system faults</div>
<div class="t" style="left:968.28px;top:1001.56px;font-size:22.0px;color:#c6c6c6;transform:scaleX(0.9766);">detected by Honeywell Forge.</div>
<div class="t" style="left:1161.40px;top:1239.42px;font-size:37.5px;color:#ffffff;transform:scaleX(1.2319);-webkit-text-stroke:0.5px #ffffff;">6%</div>
<div class="t" style="left:1149.54px;top:1296.52px;font-size:22.0px;color:#cccccc;transform:scaleX(1.1295);">AVOIDED</div>
<div class="t" style="left:1487.58px;top:1125.13px;font-size:22.5px;color:#d8d8d8;letter-spacing:1.3px;transform:scaleX(1.1269);">Avoided</div>
<div class="t" style="left:1488.50px;top:1161.06px;font-size:22.5px;color:#d8d8d8;letter-spacing:1.3px;transform:scaleX(1.167);">$22,200</div>
<div class="t" style="left:1487.07px;top:1211.02px;font-size:22.5px;color:#d8d8d8;letter-spacing:1.3px;transform:scaleX(1.1464);">Projected</div>
<div class="t" style="left:1488.50px;top:1245.63px;font-size:22.5px;color:#d8d8d8;letter-spacing:1.3px;transform:scaleX(1.167);">$23,250</div>
<div class="t" style="left:1487.58px;top:1295.59px;font-size:22.5px;color:#d8d8d8;letter-spacing:1.3px;transform:scaleX(1.1396);">Avoidable</div>
<div class="t" style="left:1488.50px;top:1331.13px;font-size:22.5px;color:#d8d8d8;letter-spacing:1.3px;transform:scaleX(1.167);">$95,450</div>
<div class="t" style="left:1486.44px;top:1381.09px;font-size:22.5px;color:#d8d8d8;letter-spacing:1.3px;transform:scaleX(1.1597);">Sunk</div>
<div class="t" style="left:1488.50px;top:1417.02px;font-size:22.5px;color:#d8d8d8;letter-spacing:1.3px;transform:scaleX(1.167);">$15,450</div>
<div class="t" style="left:1469.08px;top:1474.59px;font-size:22.5px;color:#9a9a9a;letter-spacing:1.0px;transform:scaleX(0.9634);">VIEW ALL</div>
<div class="t" style="left:1778.47px;top:909.62px;font-size:21.5px;color:#8a8a8a;letter-spacing:0.8px;transform:scaleX(1.1072);-webkit-text-stroke:0.8px #8a8a8a;">OPERATIONS - ROI</div>
<div class="t" style="left:1781.78px;top:976.60px;font-size:22.0px;color:#c6c6c6;transform:scaleX(0.9964);">Maintenance cost that can be avoided by retiring manual maintenance</div>
<div class="t" style="left:1783.58px;top:1001.56px;font-size:22.0px;color:#c6c6c6;transform:scaleX(0.978);">tasks that are automated by Honeywell Forge.</div>
<div class="t" style="left:1979.26px;top:1224.97px;font-size:37.5px;color:#ffffff;transform:scaleX(1.1907);-webkit-text-stroke:0.5px #ffffff;">33%</div>
<div class="t" style="left:1966.00px;top:1282.06px;font-size:22.0px;color:#cccccc;transform:scaleX(1.1195);">AVOIDED</div>
<div class="t" style="left:2304.04px;top:1196.06px;font-size:22.5px;color:#d8d8d8;letter-spacing:1.3px;transform:scaleX(1.1256);">Avoided</div>
<div class="t" style="left:2304.54px;top:1231.17px;font-size:22.5px;color:#d8d8d8;letter-spacing:1.3px;transform:scaleX(1.1558);">$9,720</div>
<div class="t" style="left:2303.06px;top:1281.56px;font-size:22.5px;color:#d8d8d8;letter-spacing:1.3px;transform:scaleX(1.1509);">Projected</div>
<div class="t" style="left:2304.54px;top:1316.67px;font-size:22.5px;color:#d8d8d8;letter-spacing:1.3px;transform:scaleX(1.1614);">$10,862</div>
<div class="t" style="left:2283.92px;top:1459.06px;font-size:22.5px;color:#9a9a9a;letter-spacing:1.0px;transform:scaleX(0.9588);">VIEW ALL</div>
</body></html>
